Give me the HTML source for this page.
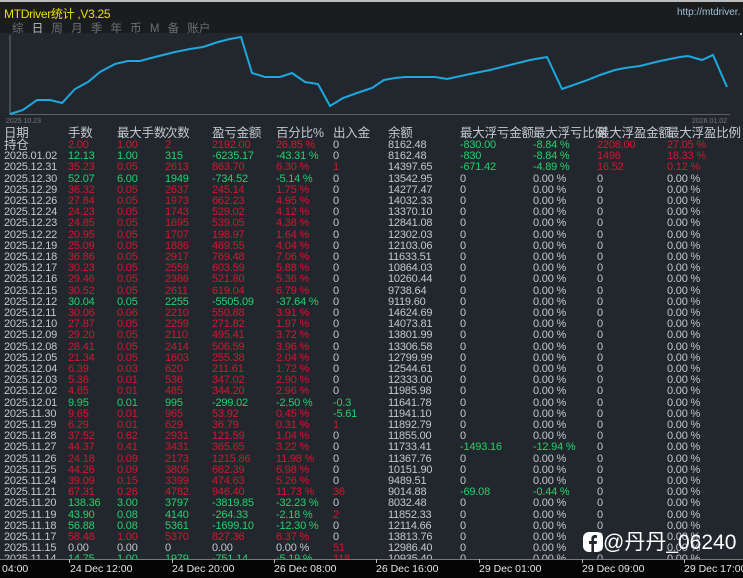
<!DOCTYPE html>
<html><head><meta charset="utf-8"><style>
*{margin:0;padding:0;box-sizing:border-box}
body{width:743px;height:578px;overflow:hidden;background:#22272e;font-family:"Liberation Sans","Noto Sans CJK SC",sans-serif;position:relative;color:#c3c7ce}
#top{position:absolute;left:0;top:0;width:743px;height:33px;background:#1b1c1e;border-top:2px solid #bbb}
#title{position:absolute;left:4px;top:3px;font-size:12px;color:#e8e000;letter-spacing:-0.3px}
#url{position:absolute;left:677px;top:5px;font-size:10px;color:#9cc0d8}
#tabs{position:absolute;left:12px;top:18px;font-size:11.5px;color:#6c6f73;word-spacing:5px;white-space:nowrap}
#tabs b{font-weight:normal;color:#b9bcc0}
.r{position:absolute;left:0;height:12px;line-height:12px;font-size:11px;white-space:nowrap;width:743px;letter-spacing:-0.2px}
.r span{position:absolute;top:0}
.a{left:4px}.b{left:68px}.c{left:117px}.d{left:165px}.e{left:212px}.f{left:276px}.g{left:333px}.h{left:388px}.i{left:460px}.j{left:533px}.k{left:597px}.l{left:667px}
.R{color:#d0182e}.G{color:#25d06c}.W{color:#c3c7ce}
.hd{font-size:12.5px;height:14px;line-height:14px}
#axis{position:absolute;left:0;top:559px;width:743px;height:19px;background:#050505;border-top:1px solid #777}
#axis span{position:absolute;top:3px;font-size:10.5px;color:#e6e6e6;white-space:nowrap}
#axis i{position:absolute;top:-1px;width:1px;height:4px;background:#bbb}
#wm{position:absolute;left:583px;top:526px;font-size:21px;color:#fff;white-space:nowrap}
</style></head><body>
<div id="top">
<div id="title">MTDriver统计 ,V3.25</div>
<div id="url">http://mtdriver.</div>
<div id="tabs">综 <b>日</b> 周 月 季 年 币 M 备 账户</div>
</div>
<svg style="position:absolute;left:0;top:33px" width="743" height="92">
<line x1="10" y1="2" x2="10" y2="82" stroke="#6c7076" stroke-width="1"/>
<line x1="10" y1="81.5" x2="730" y2="81.5" stroke="#5c6066" stroke-width="1"/>
<text x="6" y="90" font-size="7" fill="#777" font-family="Liberation Sans">2025.10.23</text>
<text x="692" y="90" font-size="7" fill="#777" font-family="Liberation Sans">2026.01.02</text>
<polyline fill="none" stroke="#1ea8e0" stroke-width="2" transform="translate(0,-33)" points="10,114 23,110 37,100 50,100 62,103 75,89 88,82 100,72 115,64 128,61 140,61 155,57 175,52 190,49 203,47 218,42 230,39 241,37 252,73 265,77 280,77 292,73 305,82 318,84 330,106 343,98 357,93 372,88 384,80 395,78 405,77 435,77 447,79 470,74 490,70 510,65 530,60 547,57 562,89 585,81 600,75 615,70 625,68 640,66 660,61 680,57 688,56 702,60 713,55 727,87"/>
<circle cx="741" cy="34" r="1" fill="#ddd" transform="translate(0,-33)"/>
</svg>

<div class="r hd" style="top:126px"><span class="a">日期</span><span class="b">手数</span><span class="c">最大手数</span><span class="d">次数</span><span class="e">盈亏金额</span><span class="f">百分比%</span><span class="g">出入金</span><span class="h">余额</span><span class="i">最大浮亏金额</span><span class="j">最大浮亏比例</span><span class="k">最大浮盈金额</span><span class="l">最大浮盈比例</span></div>

<div class="r" style="top:139px"><span class="a" style="font-size:12.5px">持仓</span><span class="b R">2.00</span><span class="c R">1.00</span><span class="d R">2</span><span class="e R">2192.00</span><span class="f R">26.85 %</span><span class="g">0</span><span class="h">8162.48</span><span class="i G">-830.00</span><span class="j G">-8.84 %</span><span class="k R">2208.00</span><span class="l R">27.05 %</span></div>
<div class="r" style="top:150.2px"><span class="a">2026.01.02</span><span class="b G">12.13</span><span class="c G">1.00</span><span class="d G">315</span><span class="e G">-6235.17</span><span class="f G">-43.31 %</span><span class="g">0</span><span class="h">8162.48</span><span class="i G">-830</span><span class="j G">-8.84 %</span><span class="k R">1496</span><span class="l R">18.33 %</span></div>
<div class="r" style="top:161.4px"><span class="a">2025.12.31</span><span class="b R">35.23</span><span class="c R">0.05</span><span class="d R">2613</span><span class="e R">863.70</span><span class="f R">6.30 %</span><span class="g R">1</span><span class="h">14397.65</span><span class="i G">-671.42</span><span class="j G">-4.89 %</span><span class="k R">16.52</span><span class="l R">0.12 %</span></div>
<div class="r" style="top:172.6px"><span class="a">2025.12.30</span><span class="b G">52.07</span><span class="c G">6.00</span><span class="d G">1949</span><span class="e G">-734.52</span><span class="f G">-5.14 %</span><span class="g">0</span><span class="h">13542.95</span><span class="i">0</span><span class="j">0.00 %</span><span class="k">0</span><span class="l">0.00 %</span></div>
<div class="r" style="top:183.8px"><span class="a">2025.12.29</span><span class="b R">36.32</span><span class="c R">0.05</span><span class="d R">2637</span><span class="e R">245.14</span><span class="f R">1.75 %</span><span class="g">0</span><span class="h">14277.47</span><span class="i">0</span><span class="j">0.00 %</span><span class="k">0</span><span class="l">0.00 %</span></div>
<div class="r" style="top:195px"><span class="a">2025.12.26</span><span class="b R">27.84</span><span class="c R">0.05</span><span class="d R">1973</span><span class="e R">662.23</span><span class="f R">4.95 %</span><span class="g">0</span><span class="h">14032.33</span><span class="i">0</span><span class="j">0.00 %</span><span class="k">0</span><span class="l">0.00 %</span></div>
<div class="r" style="top:206.2px"><span class="a">2025.12.24</span><span class="b R">24.23</span><span class="c R">0.05</span><span class="d R">1743</span><span class="e R">529.02</span><span class="f R">4.12 %</span><span class="g">0</span><span class="h">13370.10</span><span class="i">0</span><span class="j">0.00 %</span><span class="k">0</span><span class="l">0.00 %</span></div>
<div class="r" style="top:217.4px"><span class="a">2025.12.23</span><span class="b R">24.85</span><span class="c R">0.05</span><span class="d R">1695</span><span class="e R">539.05</span><span class="f R">4.38 %</span><span class="g">0</span><span class="h">12841.08</span><span class="i">0</span><span class="j">0.00 %</span><span class="k">0</span><span class="l">0.00 %</span></div>
<div class="r" style="top:228.6px"><span class="a">2025.12.22</span><span class="b R">20.95</span><span class="c R">0.05</span><span class="d R">1707</span><span class="e R">198.97</span><span class="f R">1.64 %</span><span class="g">0</span><span class="h">12302.03</span><span class="i">0</span><span class="j">0.00 %</span><span class="k">0</span><span class="l">0.00 %</span></div>
<div class="r" style="top:239.8px"><span class="a">2025.12.19</span><span class="b R">25.09</span><span class="c R">0.05</span><span class="d R">1886</span><span class="e R">469.55</span><span class="f R">4.04 %</span><span class="g">0</span><span class="h">12103.06</span><span class="i">0</span><span class="j">0.00 %</span><span class="k">0</span><span class="l">0.00 %</span></div>
<div class="r" style="top:251px"><span class="a">2025.12.18</span><span class="b R">36.86</span><span class="c R">0.05</span><span class="d R">2917</span><span class="e R">769.48</span><span class="f R">7.06 %</span><span class="g">0</span><span class="h">11633.51</span><span class="i">0</span><span class="j">0.00 %</span><span class="k">0</span><span class="l">0.00 %</span></div>
<div class="r" style="top:262.2px"><span class="a">2025.12.17</span><span class="b R">30.23</span><span class="c R">0.05</span><span class="d R">2559</span><span class="e R">603.59</span><span class="f R">5.88 %</span><span class="g">0</span><span class="h">10864.03</span><span class="i">0</span><span class="j">0.00 %</span><span class="k">0</span><span class="l">0.00 %</span></div>
<div class="r" style="top:273.4px"><span class="a">2025.12.16</span><span class="b R">29.46</span><span class="c R">0.05</span><span class="d R">2386</span><span class="e R">521.80</span><span class="f R">5.36 %</span><span class="g">0</span><span class="h">10260.44</span><span class="i">0</span><span class="j">0.00 %</span><span class="k">0</span><span class="l">0.00 %</span></div>
<div class="r" style="top:284.6px"><span class="a">2025.12.15</span><span class="b R">30.52</span><span class="c R">0.05</span><span class="d R">2611</span><span class="e R">619.04</span><span class="f R">6.79 %</span><span class="g">0</span><span class="h">9738.64</span><span class="i">0</span><span class="j">0.00 %</span><span class="k">0</span><span class="l">0.00 %</span></div>
<div class="r" style="top:295.8px"><span class="a">2025.12.12</span><span class="b G">30.04</span><span class="c G">0.05</span><span class="d G">2255</span><span class="e G">-5505.09</span><span class="f G">-37.64 %</span><span class="g">0</span><span class="h">9119.60</span><span class="i">0</span><span class="j">0.00 %</span><span class="k">0</span><span class="l">0.00 %</span></div>
<div class="r" style="top:307px"><span class="a">2025.12.11</span><span class="b R">30.06</span><span class="c R">0.06</span><span class="d R">2210</span><span class="e R">550.88</span><span class="f R">3.91 %</span><span class="g">0</span><span class="h">14624.69</span><span class="i">0</span><span class="j">0.00 %</span><span class="k">0</span><span class="l">0.00 %</span></div>
<div class="r" style="top:318.2px"><span class="a">2025.12.10</span><span class="b R">27.87</span><span class="c R">0.05</span><span class="d R">2259</span><span class="e R">271.82</span><span class="f R">1.97 %</span><span class="g">0</span><span class="h">14073.81</span><span class="i">0</span><span class="j">0.00 %</span><span class="k">0</span><span class="l">0.00 %</span></div>
<div class="r" style="top:329.4px"><span class="a">2025.12.09</span><span class="b R">29.20</span><span class="c R">0.05</span><span class="d R">2110</span><span class="e R">495.41</span><span class="f R">3.72 %</span><span class="g">0</span><span class="h">13801.99</span><span class="i">0</span><span class="j">0.00 %</span><span class="k">0</span><span class="l">0.00 %</span></div>
<div class="r" style="top:340.6px"><span class="a">2025.12.08</span><span class="b R">28.41</span><span class="c R">0.05</span><span class="d R">2414</span><span class="e R">506.59</span><span class="f R">3.96 %</span><span class="g">0</span><span class="h">13306.58</span><span class="i">0</span><span class="j">0.00 %</span><span class="k">0</span><span class="l">0.00 %</span></div>
<div class="r" style="top:351.8px"><span class="a">2025.12.05</span><span class="b R">21.34</span><span class="c R">0.05</span><span class="d R">1603</span><span class="e R">255.38</span><span class="f R">2.04 %</span><span class="g">0</span><span class="h">12799.99</span><span class="i">0</span><span class="j">0.00 %</span><span class="k">0</span><span class="l">0.00 %</span></div>
<div class="r" style="top:363px"><span class="a">2025.12.04</span><span class="b R">6.39</span><span class="c R">0.03</span><span class="d R">620</span><span class="e R">211.61</span><span class="f R">1.72 %</span><span class="g">0</span><span class="h">12544.61</span><span class="i">0</span><span class="j">0.00 %</span><span class="k">0</span><span class="l">0.00 %</span></div>
<div class="r" style="top:374.2px"><span class="a">2025.12.03</span><span class="b R">5.36</span><span class="c R">0.01</span><span class="d R">536</span><span class="e R">347.02</span><span class="f R">2.90 %</span><span class="g">0</span><span class="h">12333.00</span><span class="i">0</span><span class="j">0.00 %</span><span class="k">0</span><span class="l">0.00 %</span></div>
<div class="r" style="top:385.4px"><span class="a">2025.12.02</span><span class="b R">4.85</span><span class="c R">0.01</span><span class="d R">485</span><span class="e R">344.20</span><span class="f R">2.96 %</span><span class="g">0</span><span class="h">11985.98</span><span class="i">0</span><span class="j">0.00 %</span><span class="k">0</span><span class="l">0.00 %</span></div>
<div class="r" style="top:396.6px"><span class="a">2025.12.01</span><span class="b G">9.95</span><span class="c G">0.01</span><span class="d G">995</span><span class="e G">-299.02</span><span class="f G">-2.50 %</span><span class="g G">-0.3</span><span class="h">11641.78</span><span class="i">0</span><span class="j">0.00 %</span><span class="k">0</span><span class="l">0.00 %</span></div>
<div class="r" style="top:407.8px"><span class="a">2025.11.30</span><span class="b R">9.65</span><span class="c R">0.01</span><span class="d R">965</span><span class="e R">53.92</span><span class="f R">0.45 %</span><span class="g G">-5.61</span><span class="h">11941.10</span><span class="i">0</span><span class="j">0.00 %</span><span class="k">0</span><span class="l">0.00 %</span></div>
<div class="r" style="top:419px"><span class="a">2025.11.29</span><span class="b R">6.29</span><span class="c R">0.01</span><span class="d R">629</span><span class="e R">36.79</span><span class="f R">0.31 %</span><span class="g R">1</span><span class="h">11892.79</span><span class="i">0</span><span class="j">0.00 %</span><span class="k">0</span><span class="l">0.00 %</span></div>
<div class="r" style="top:430.2px"><span class="a">2025.11.28</span><span class="b R">37.52</span><span class="c R">0.62</span><span class="d R">2931</span><span class="e R">121.59</span><span class="f R">1.04 %</span><span class="g">0</span><span class="h">11855.00</span><span class="i">0</span><span class="j">0.00 %</span><span class="k">0</span><span class="l">0.00 %</span></div>
<div class="r" style="top:441.4px"><span class="a">2025.11.27</span><span class="b R">44.37</span><span class="c R">0.41</span><span class="d R">3431</span><span class="e R">365.65</span><span class="f R">3.22 %</span><span class="g">0</span><span class="h">11733.41</span><span class="i G">-1493.16</span><span class="j G">-12.94 %</span><span class="k">0</span><span class="l">0.00 %</span></div>
<div class="r" style="top:452.6px"><span class="a">2025.11.26</span><span class="b R">24.18</span><span class="c R">0.09</span><span class="d R">2173</span><span class="e R">1215.86</span><span class="f R">11.98 %</span><span class="g">0</span><span class="h">11367.76</span><span class="i">0</span><span class="j">0.00 %</span><span class="k">0</span><span class="l">0.00 %</span></div>
<div class="r" style="top:463.8px"><span class="a">2025.11.25</span><span class="b R">44.26</span><span class="c R">0.09</span><span class="d R">3805</span><span class="e R">662.39</span><span class="f R">6.98 %</span><span class="g">0</span><span class="h">10151.90</span><span class="i">0</span><span class="j">0.00 %</span><span class="k">0</span><span class="l">0.00 %</span></div>
<div class="r" style="top:475px"><span class="a">2025.11.24</span><span class="b R">39.09</span><span class="c R">0.15</span><span class="d R">3399</span><span class="e R">474.63</span><span class="f R">5.26 %</span><span class="g">0</span><span class="h">9489.51</span><span class="i">0</span><span class="j">0.00 %</span><span class="k">0</span><span class="l">0.00 %</span></div>
<div class="r" style="top:486.2px"><span class="a">2025.11.21</span><span class="b R">67.31</span><span class="c R">0.26</span><span class="d R">4782</span><span class="e R">946.40</span><span class="f R">11.73 %</span><span class="g R">36</span><span class="h">9014.88</span><span class="i G">-69.08</span><span class="j G">-0.44 %</span><span class="k">0</span><span class="l">0.00 %</span></div>
<div class="r" style="top:497.4px"><span class="a">2025.11.20</span><span class="b G">138.36</span><span class="c G">3.00</span><span class="d G">3797</span><span class="e G">-3819.85</span><span class="f G">-32.23 %</span><span class="g">0</span><span class="h">8032.48</span><span class="i">0</span><span class="j">0.00 %</span><span class="k">0</span><span class="l">0.00 %</span></div>
<div class="r" style="top:508.6px"><span class="a">2025.11.19</span><span class="b G">43.90</span><span class="c G">0.08</span><span class="d G">4140</span><span class="e G">-264.33</span><span class="f G">-2.18 %</span><span class="g R">2</span><span class="h">11852.33</span><span class="i">0</span><span class="j">0.00 %</span><span class="k">0</span><span class="l">0.00 %</span></div>
<div class="r" style="top:519.8px"><span class="a">2025.11.18</span><span class="b G">56.88</span><span class="c G">0.08</span><span class="d G">5361</span><span class="e G">-1699.10</span><span class="f G">-12.30 %</span><span class="g">0</span><span class="h">12114.66</span><span class="i">0</span><span class="j">0.00 %</span><span class="k">0</span><span class="l">0.00 %</span></div>
<div class="r" style="top:531px"><span class="a">2025.11.17</span><span class="b R">58.48</span><span class="c R">1.00</span><span class="d R">5370</span><span class="e R">827.36</span><span class="f R">6.37 %</span><span class="g">0</span><span class="h">13813.76</span><span class="i">0</span><span class="j">0.00 %</span><span class="k">0</span><span class="l">0.00 %</span></div>
<div class="r" style="top:542.2px"><span class="a">2025.11.15</span><span class="b">0.00</span><span class="c">0.00</span><span class="d">0</span><span class="e">0.00</span><span class="f">0.00 %</span><span class="g R">51</span><span class="h">12986.40</span><span class="i">0</span><span class="j">0.00 %</span><span class="k">0</span><span class="l">0.00 %</span></div>
<div class="r" style="top:553.4px"><span class="a">2025.11.14</span><span class="b G">14.75</span><span class="c G">1.00</span><span class="d G">1979</span><span class="e G">-751.14</span><span class="f G">-5.19 %</span><span class="g R">118</span><span class="h">10935.40</span><span class="i">0</span><span class="j">0.00 %</span><span class="k">0</span><span class="l">0.00 %</span></div>

<div id="wm"><svg width="20" height="20" viewBox="0 0 20 20" style="vertical-align:-3px"><rect x="0" y="0" width="20" height="20" rx="6" fill="#fff"/><path d="M11 20V12h2.6l.4-3H11V7.3c0-.9.3-1.4 1.5-1.4H14V3.2C13.6 3.1 12.8 3 12 3c-2.2 0-3.6 1.3-3.6 3.7V9H6v3h2.4v8z" fill="#22272e"/></svg>@丹丹_06240</div>

<div id="axis">
<span style="left:2px">04:00</span>
<i style="left:69px"></i><span style="left:70px">24 Dec 12:00</span>
<i style="left:172px"></i><span style="left:172px">24 Dec 20:00</span>
<i style="left:274px"></i><span style="left:274px">26 Dec 08:00</span>
<i style="left:376px"></i><span style="left:376px">26 Dec 16:00</span>
<i style="left:479px"></i><span style="left:479px">29 Dec 01:00</span>
<i style="left:582px"></i><span style="left:582px">29 Dec 09:00</span>
<i style="left:684px"></i><span style="left:684px">29 Dec 17:00</span>
</div>
</body></html>
